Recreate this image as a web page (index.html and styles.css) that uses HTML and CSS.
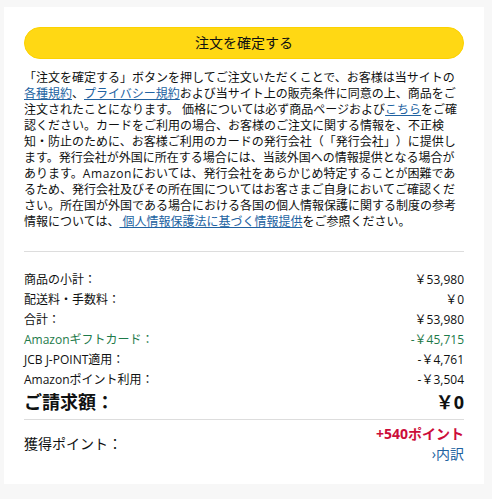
FILE: index.html
```html
<!DOCTYPE html>
<html lang="ja">
<head>
<meta charset="utf-8">
<title>注文を確定する</title>
<link rel="stylesheet" href="styles.css">
</head>
<body>
<div class="card">
  <button class="place-order">注文を確定する</button>
  <p class="notice">「注文を確定する」ボタンを押してご注文いただくことで、お客様は当サイトの<a href="#">各種規約</a>、<a href="#">プライバシー規約</a>および当サイト上の販売条件に同意の上、商品をご注文されたことになります。 価格については必ず商品ページおよび<a href="#">こちら</a>をご確認ください。カードをご利用の場合、お客様のご注文に関する情報を、不正検知・防止のために、お客様ご利用のカードの発行会社（「発行会社」）に提供します。発行会社が外国に所在する場合には、当該外国への情報提供となる場合があります。<span class="brand">Amazon</span>においては、発行会社をあらかじめ特定することが困難であるため、発行会社及びその所在国についてはお客さまご自身においてご確認ください。所在国が外国である場合における各国の個人情報保護に関する制度の参考情報については、<a href="#"> 個人情報保護法に基づく情報提供</a>をご参照ください。</p>
  <hr class="divider">
  <div class="summary">
    <div class="row"><span>商品の小計：</span><span>￥53,980</span></div>
    <div class="row"><span>配送料・手数料：</span><span>￥0</span></div>
    <div class="row"><span>合計：</span><span>￥53,980</span></div>
    <div class="row green"><span>Amazonギフトカード：</span><span>-￥45,715</span></div>
    <div class="row"><span>JCB J-POINT適用：</span><span>-￥4,761</span></div>
    <div class="row"><span>Amazonポイント利用：</span><span>-￥3,504</span></div>
    <div class="row total"><span>ご請求額：</span><span>￥0</span></div>
  </div>
  <hr class="divider tight">
  <div class="points">
    <span class="points-label">獲得ポイント：</span>
    <div class="points-right">
      <span class="points-value">+540ポイント</span>
      <a href="#" class="breakdown">›内訳</a>
    </div>
  </div>
</div>
</body>
</html>
```
FILE: styles.css
```css
html, body {
  margin: 0;
  padding: 0;
}
body {
  background: #f7f7f7;
  font-family: "Open Sans", "Noto Sans CJK JP", sans-serif;
  color: #0f1111;
  padding: 7px 8px 0 4px;
  text-spacing-trim: space-all;
}
.card {
  background: #fff;
  padding: 20px 20px 20px 20px;
}
.place-order {
  display: block;
  width: 100%;
  height: 32px;
  border: 1px solid #fcd200;
  border-radius: 16px;
  background: #ffd814;
  color: #0f1111;
  font-family: inherit;
  font-size: 14px;
  line-height: 30px;
  padding: 0;
  cursor: pointer;
}
.notice {
  margin: 11px 0 0;
  font-size: 12px;
  line-height: 16px;
  line-break: normal;
  text-spacing-trim: space-all;
}
.notice .brand {
  letter-spacing: 0.6px;
}
.notice a {
  color: #2162a1;
  text-decoration: underline;
  white-space: pre-wrap;
}
.divider {
  border: 0;
  border-top: 1px solid #dddddd;
  margin: 21px 0 18px;
  height: 0;
}
.divider.tight {
  margin: 5px 0 4px;
}
.summary {
  display: flex;
  flex-direction: column;
}
.row {
  display: flex;
  justify-content: space-between;
  font-size: 12px;
  line-height: 20px;
}
.row.green {
  color: #1e7a4a;
}
.row.total {
  font-size: 18px;
  font-weight: 700;
  line-height: 24px;
}
.points {
  display: flex;
  justify-content: space-between;
  align-items: center;
}
.points-label {
  font-size: 14px;
  line-height: 20px;
}
.points-right {
  display: flex;
  flex-direction: column;
  align-items: flex-end;
}
.points-value {
  color: #cc0c39;
  font-weight: 700;
  font-size: 14px;
  line-height: 20px;
}
.breakdown {
  color: #2162a1;
  text-decoration: none;
  font-size: 14px;
  line-height: 20px;
}
```
